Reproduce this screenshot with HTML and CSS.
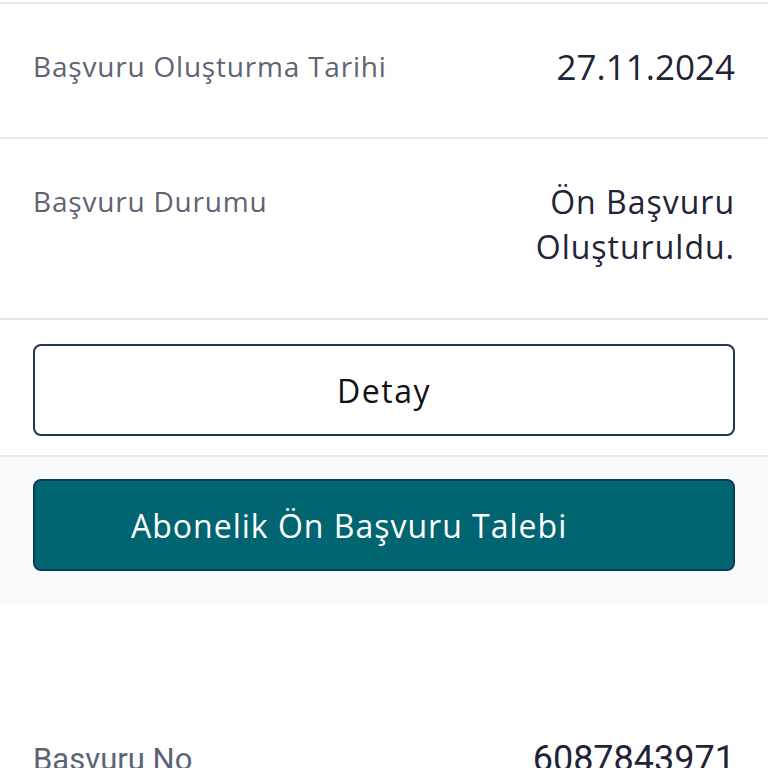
FILE: index.html
```html
<!DOCTYPE html>
<html lang="tr">
<head>
  <meta charset="UTF-8">
  <meta name="viewport" content="width=device-width, initial-scale=1.0">
  <title>Başvuru Detayı</title>
<link rel="stylesheet" href="styles.css">
</head>
<body>
  <div class="card">
    <div class="row first">
      <span class="label">Başvuru Oluşturma Tarihi</span>
      <span class="value date">27.11.2024</span>
    </div>
    <div class="row">
      <span class="label">Başvuru Durumu</span>
      <span class="value">Ön Başvuru<br>Oluşturuldu.</span>
    </div>
    <div class="actions">
      <button class="btn-outline">Detay</button>
    </div>
  </div>

  <div class="request">
    <button class="btn-primary">Abonelik Ön Başvuru Talebi</button>
  </div>

  <div class="card next">
    <div class="row plain">
      <span class="label">Başvuru No</span>
      <span class="value">6087843971</span>
    </div>
  </div>
</body>
</html>
```

FILE: styles.css
```css
body { margin: 0; font-family: "Open Sans", "Noto Sans", sans-serif; background: #fff; color: #1f2437; }
.card { background: #fff; }
.row { display: flex; justify-content: space-between; align-items: flex-start; padding: 40px 33px 49px; border-bottom: 2px solid #e7e8ec; }
.row.first { border-top: 2px solid #e7e8ec; margin-top: 2px; padding-bottom: 48px; }
.label { font-size: 28px; line-height: 45px; letter-spacing: 0.8px; color: #5d6373; }
.value { font-size: 32px; line-height: 45px; letter-spacing: 1px; color: #1f2437; text-align: right; }
.value.date { font-size: 35px; letter-spacing: 0; }
.actions { padding: 24px 33px 19px; border-bottom: 2px solid #e7e8ec; }
button { display: block; width: 100%; height: 92px; font-family: inherit; font-size: 32px; letter-spacing: 1px; border-radius: 8px; cursor: pointer; }
.btn-outline { background: #fff; color: #111; border: 2px solid #1f3655; letter-spacing: 1.5px; }
.request { background: #f8f9fa; padding: 22px 33px 33px; }
.btn-primary { background: #006571; color: #fff; border: 2px solid #0b3d5a; text-align: left; padding-left: 96px; }
.next { padding-top: 93px; }
.row.plain { border-bottom: none; }
.row.plain .label { font-family: "Roboto", sans-serif; font-size: 31px; letter-spacing: 0; }
.row.plain .value { font-family: "Roboto", sans-serif; font-size: 36px; letter-spacing: 0; }
```
